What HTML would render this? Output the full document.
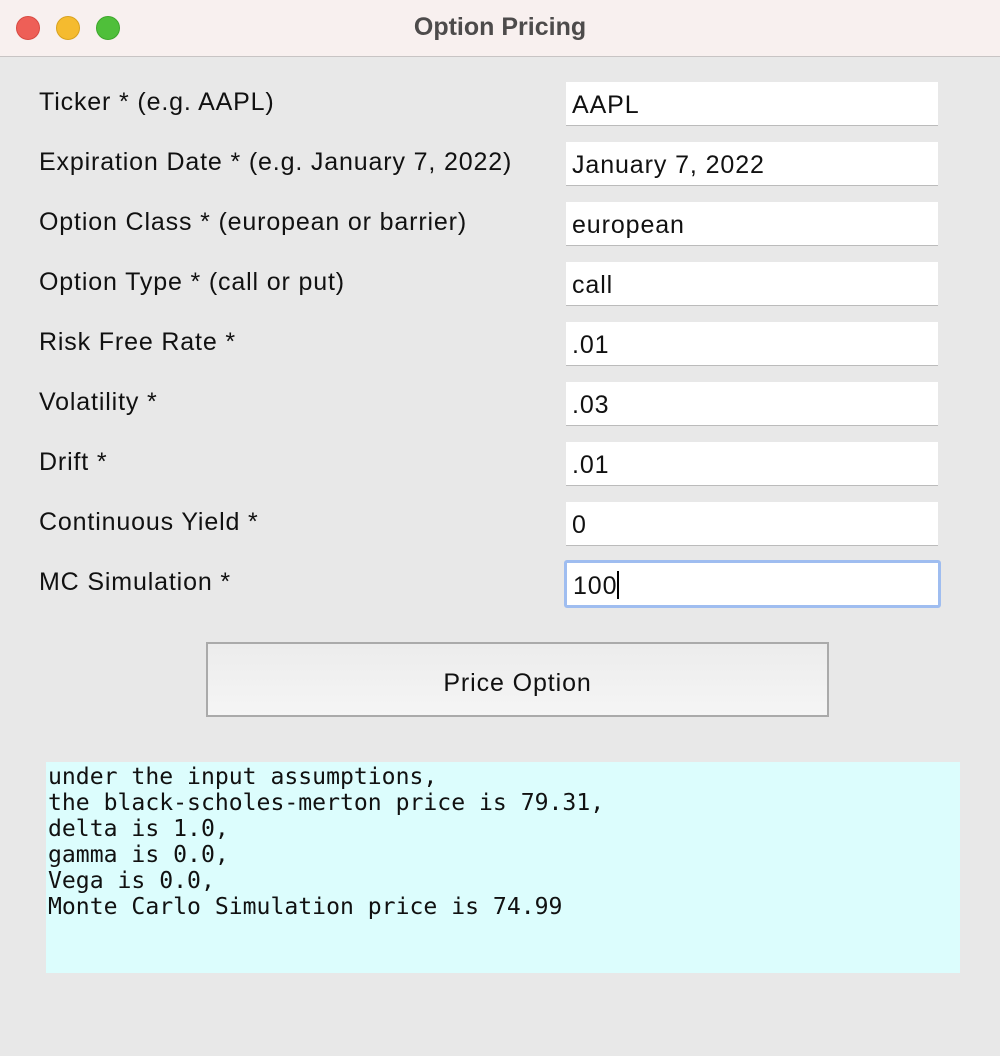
<!DOCTYPE html>
<html><head><style>
body{margin:0;width:1000px;height:1056px;background:#e8e8e8;font-family:"Liberation Sans",sans-serif;position:relative;overflow:hidden}
.tb{position:absolute;left:0;top:0;width:1000px;height:56px;background:#f8f0ef;border-bottom:1px solid #c8c4c4}
.dot{position:absolute;top:16px;width:22px;height:22px;border-radius:50%}
.title{position:absolute;top:13px;left:0;width:1000px;text-align:center;font-weight:bold;font-size:25px;color:#4d4b4b}
.lbl{position:absolute;left:39px;font-size:25px;letter-spacing:0.85px;color:#111}
.inp{position:absolute;left:566px;width:372px;height:44px;background:#fff;border-bottom:1px solid #bbb;box-sizing:border-box;font-size:25px;letter-spacing:0.9px;padding:9px 0 0 6px;color:#111}
.btn{position:absolute;left:206px;top:642px;width:623px;height:75px;box-sizing:border-box;border:2px solid #aaa;background:linear-gradient(#ececec,#f5f5f5);text-align:center;font-size:25px;letter-spacing:0.9px;line-height:78px;color:#111}
.out{position:absolute;left:46px;top:762px;width:914px;height:211px;background:#dcfdfd;font-family:"DejaVu Sans Mono","Liberation Mono",monospace;font-size:23.1px;line-height:26px;padding:2px 0 0 2px;box-sizing:border-box;white-space:pre;color:#111}
</style></head><body>
<div class="tb">
<div class="dot" style="left:16px;background:#ee5f57;border:1px solid #d84a42;"></div>
<div class="dot" style="left:56px;background:#f5bb2f;border:1px solid #d9a21e;"></div>
<div class="dot" style="left:96px;background:#4fbf3a;border:1px solid #3da72b;"></div>
<div class="title">Option Pricing</div>
</div>
<div class="lbl" style="top:88px">Ticker * (e.g. AAPL)</div><div class="inp" style="top:82px">AAPL</div>
<div class="lbl" style="top:148px">Expiration Date * (e.g. January 7, 2022)</div><div class="inp" style="top:142px">January 7, 2022</div>
<div class="lbl" style="top:208px">Option Class * (european or barrier)</div><div class="inp" style="top:202px">european</div>
<div class="lbl" style="top:268px">Option Type * (call or put)</div><div class="inp" style="top:262px">call</div>
<div class="lbl" style="top:328px">Risk Free Rate *</div><div class="inp" style="top:322px">.01</div>
<div class="lbl" style="top:388px">Volatility *</div><div class="inp" style="top:382px">.03</div>
<div class="lbl" style="top:448px">Drift *</div><div class="inp" style="top:442px">.01</div>
<div class="lbl" style="top:508px">Continuous Yield *</div><div class="inp" style="top:502px">0</div>
<div class="lbl" style="top:568px">MC Simulation *</div><div class="inp" style="top:560px;left:564px;width:377px;height:48px;border:3px solid #9fbdf0;border-radius:3px;padding:8px 0 0 6px">100<span style="display:inline-block;width:2px;height:28px;background:#000;vertical-align:-5px"></span></div>
<div class="btn">Price Option</div>
<div class="out">under the input assumptions,
the black-scholes-merton price is 79.31,
delta is 1.0,
gamma is 0.0,
Vega is 0.0,
Monte Carlo Simulation price is 74.99</div>
</body></html>
